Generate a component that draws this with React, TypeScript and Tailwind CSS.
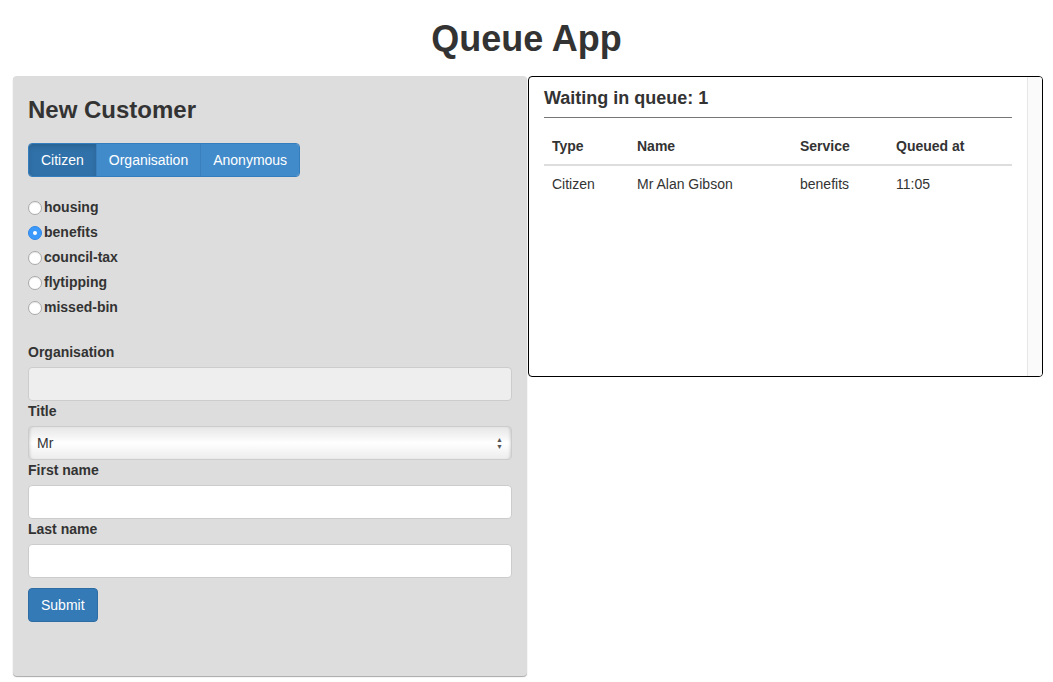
import { useState } from "react";

const services = ["housing", "benefits", "council-tax", "flytipping", "missed-bin"];
const types = ["Citizen", "Organisation", "Anonymous"];

function Radio({ checked }: { checked: boolean }) {
  if (checked) {
    return (
      <span className="flex h-[14px] w-[14px] items-center justify-center rounded-full border border-[#2f87e8] bg-[#3b99fc]">
        <span className="h-[4px] w-[4px] rounded-full bg-white" />
      </span>
    );
  }
  return <span className="h-[14px] w-[14px] rounded-full border border-[#a9a9a9] bg-white shadow-[inset_0_1px_1px_rgba(0,0,0,0.08)]" />;
}

function Field({ label, children }: { label: string; children: React.ReactNode }) {
  return (
    <div className="flex flex-col">
      <label className="h-5 text-[14px] font-bold leading-5 text-[#333]">{label}</label>
      <div className="mt-[5px]">{children}</div>
    </div>
  );
}

export default function App() {
  const [type, setType] = useState("Citizen");
  const [service, setService] = useState("benefits");

  return (
    <div className="min-h-screen bg-white font-['Liberation_Sans',Arial,sans-serif] text-[#333]">
      <h1 className="pt-[19px] pb-[17px] text-center text-[36px] font-semibold leading-[40px]">Queue App</h1>

      <div className="ml-[13px] grid grid-cols-[514px_515px] items-start gap-px">
        {/* new customer form */}
        <section className="h-[600px] rounded bg-[#dddddd] px-[15px] shadow-[0_1px_1px_rgba(0,0,0,0.35)]">
          <h3 className="mt-[21px] text-[24px] font-semibold leading-[26px]">New Customer</h3>

          <div className="mt-5 flex h-[34px] w-fit overflow-hidden rounded border border-[#357ebd]">
            {types.map((t, i) => (
              <button
                key={t}
                onClick={() => setType(t)}
                className={
                  (t === type
                    ? "bg-[#3071a9] shadow-[inset_0_3px_5px_rgba(0,0,0,0.125)] "
                    : "bg-[#428bca] ") +
                  (i > 0 ? "border-l border-[#3a80bd] " : "") +
                  "px-3 text-[14px] text-white"
                }
              >
                {t}
              </button>
            ))}
          </div>

          <div className="mt-[18px] flex flex-col">
            {services.map((s) => (
              <label key={s} onClick={() => setService(s)} className="flex h-[25px] items-center gap-[2px] text-[14px] font-bold">
                <Radio checked={s === service} />
                {s}
              </label>
            ))}
          </div>

          <div className="mt-[22px] flex flex-col">
            <Field label="Organisation">
              <div className="h-[34px] rounded border border-[#ccc] bg-[#eeeeee]" />
            </Field>
            <Field label="Title">
              <div className="flex h-[34px] items-center justify-between rounded border border-[#ccc] bg-gradient-to-b from-[#e6e6e6] via-white to-[#ececec] px-2 text-[14px] shadow-[inset_3px_0_3px_-2px_rgba(0,0,0,0.15),inset_-3px_0_3px_-2px_rgba(0,0,0,0.15)]">
                <span>Mr</span>
                <span className="flex flex-col text-[7px] leading-[7px] text-[#555]">
                  <span>▲</span>
                  <span>▼</span>
                </span>
              </div>
            </Field>
            <Field label="First name">
              <div className="h-[34px] rounded border border-[#ccc] bg-white" />
            </Field>
            <Field label="Last name">
              <div className="h-[34px] rounded border border-[#ccc] bg-white" />
            </Field>
          </div>

          <button className="mt-[10px] h-[34px] rounded border border-[#2e6da4] bg-[#337ab7] px-3 text-[14px] text-white">
            Submit
          </button>
        </section>

        {/* queue */}
        <section className="flex h-[301px] overflow-hidden rounded border border-black bg-white">
          <div className="flex-1 px-[15px]">
            <h4 className="mt-[11px] text-[18px] font-semibold leading-5">Waiting in queue: 1</h4>
            <hr className="mt-[9px] border-t border-[#777]" />
            <table className="mt-[18px] w-full table-fixed text-left text-[14px]">
              <colgroup>
                <col className="w-[85px]" />
                <col className="w-[163px]" />
                <col className="w-[96px]" />
                <col />
              </colgroup>
              <thead>
                <tr className="border-b-2 border-[#ddd]">
                  <th className="px-2 pt-0 pb-[8px] font-bold leading-5">Type</th>
                  <th className="px-2 pt-0 pb-[8px] font-bold leading-5">Name</th>
                  <th className="px-2 pt-0 pb-[8px] font-bold leading-5">Service</th>
                  <th className="px-2 pt-0 pb-[8px] font-bold leading-5">Queued at</th>
                </tr>
              </thead>
              <tbody>
                <tr>
                  <td className="p-2 leading-5">Citizen</td>
                  <td className="p-2 leading-5">Mr Alan Gibson</td>
                  <td className="p-2 leading-5">benefits</td>
                  <td className="p-2 leading-5">11:05</td>
                </tr>
              </tbody>
            </table>
          </div>
          <div className="w-[15px] border-l border-[#e6e6e6] bg-[#fafafa]" />
        </section>
      </div>
    </div>
  );
}
